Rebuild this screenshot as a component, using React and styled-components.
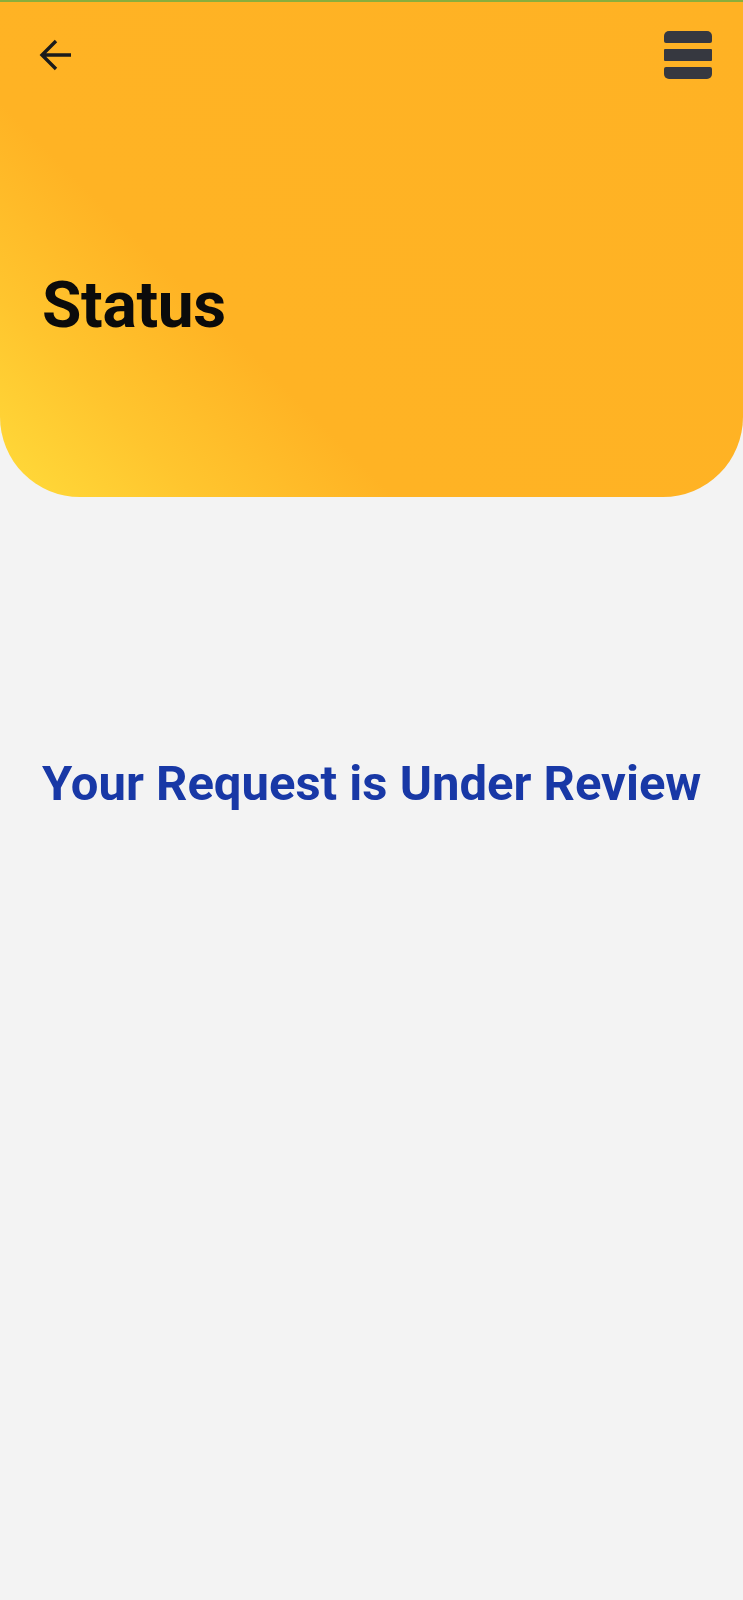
import styled, { createGlobalStyle } from 'styled-components';

const GlobalStyle = createGlobalStyle`
  html, body {
    margin: 0;
    padding: 0;
    background: #f3f3f3;
  }
  * { box-sizing: border-box; }
`;

const Page = styled.div`
  min-height: 1600px;
  background: #f3f3f3;
  font-family: Roboto, "Liberation Sans", sans-serif;
  border-top: 2px solid #8aae3c;
`;

const Header = styled.header`
  height: 495px;
  padding: 29px 31px 0 39px;
  border-radius: 0 0 80px 80px;
  background: linear-gradient(45deg, #ffdb3a 0%, #ffc52e 16%, #ffb324 32%, #ffb224 100%);
  display: flex;
  flex-direction: column;
`;

const TopBar = styled.div`
  height: 48px;
  display: flex;
  justify-content: space-between;
  align-items: center;
`;

const IconButton = styled.button`
  border: 0;
  padding: 0;
  background: none;
  display: flex;
  align-items: center;
  justify-content: center;
  cursor: pointer;
`;

const Menu = styled.div`
  width: 48px;
  display: flex;
  flex-direction: column;
  gap: 6px;
`;

const MenuBar = styled.span`
  display: block;
  height: 12px;
  background: #363840;
  border-radius: ${(props) => props.radius};
`;

const Title = styled.h1`
  margin: 195px 0 0 3px;
  font-size: 64px;
  line-height: 1;
  font-weight: 700;
  color: #0b0b0b;
  letter-spacing: -0.3px;
`;

const Message = styled.h2`
  margin: 262px 0 0 42px;
  font-size: 49px;
  line-height: 1;
  font-weight: 700;
  color: #1838a6;
`;

const BackArrow = () => (
  <svg width="34" height="32" viewBox="0 0 34 32" fill="none">
    <path d="M32 16H3.5M17 2L3 16l14 14" stroke="#1b1b1b" strokeWidth="3.4" strokeLinecap="butt" />
  </svg>
);

const App = () => {
  return (
    <>
      <GlobalStyle />
      <Page>
        <Header>
          <TopBar>
            <IconButton aria-label="back">
              <BackArrow />
            </IconButton>
            <Menu>
              <MenuBar radius="5px 5px 2px 2px" />
              <MenuBar radius="1px" />
              <MenuBar radius="2px 2px 5px 5px" />
            </Menu>
          </TopBar>
          <Title>Status</Title>
        </Header>
        <Message>Your Request is Under Review</Message>
      </Page>
    </>
  );
};

export default App;
